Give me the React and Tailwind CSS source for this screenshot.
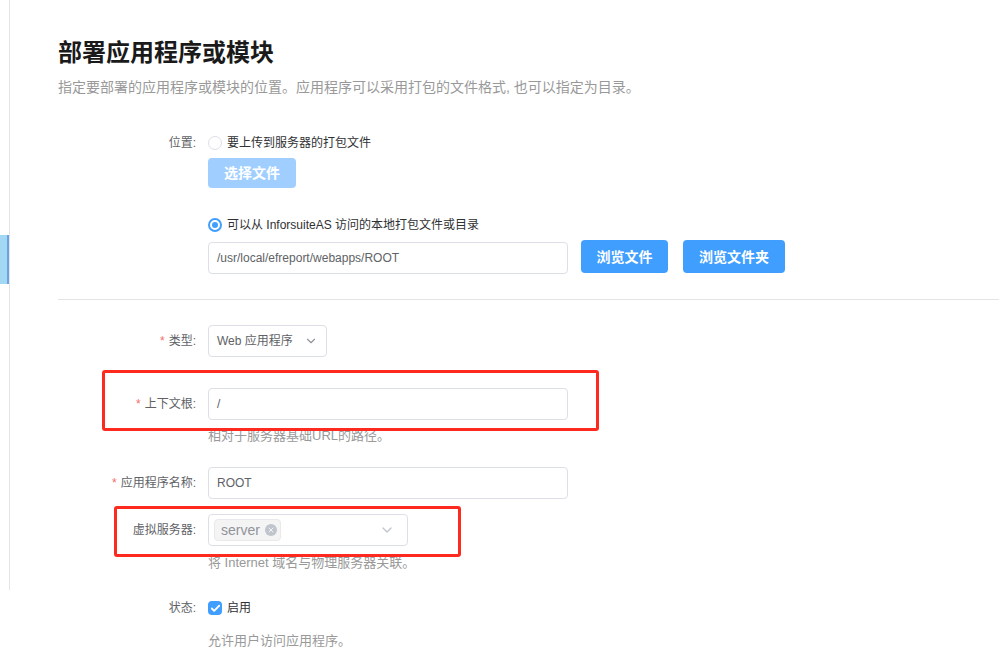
import { Check, ChevronDown, X } from "lucide-react";

const font = { fontFamily: '"Liberation Sans", "Noto Sans CJK SC", sans-serif' };

function Row({ label, required, children, className = "" }) {
  return (
    <div className={`flex items-center ${className}`}>
      <div className="w-[150px] shrink-0 pr-3 text-right text-xs text-[#606266]">
        {required && <span className="mr-1 text-[#f56c6c]">*</span>}
        {label}:
      </div>
      {children}
    </div>
  );
}

function Field({ children }) {
  return <div className="pl-[150px]">{children}</div>;
}

export default function App() {
  return (
    <div className="relative flex h-[647px] w-[999px] overflow-hidden bg-white" style={font}>
      {/* Sidebar edge */}
      <div className="h-[590px] w-[10px] shrink-0 border-r border-[#e4e4e4]">
        <div className="mt-[235px] flex h-[49px]">
          <div className="w-[8px] bg-[#a3d8f4]" />
          <div className="w-[2px] bg-[#6aa3e0]" />
        </div>
      </div>

      {/* Main */}
      <div className="flex-1 pl-[48px] pt-[37px]">
        <h1 className="text-2xl leading-8 font-bold text-[#1a1a1a]">部署应用程序或模块</h1>
        <p className="mt-[8px] text-sm leading-5 text-[#999]">
          指定要部署的应用程序或模块的位置。应用程序可以采用打包的文件格式, 也可以指定为目录。
        </p>

        <Row label="位置" className="mt-9 h-5">
          <label className="flex items-center gap-[5px] text-xs text-[#303133]">
            <span className="h-[14px] w-[14px] rounded-full border border-[#dcdfe6] bg-white" />
            要上传到服务器的打包文件
          </label>
        </Row>
        <Field>
          <button className="mt-[5px] h-[30px] w-[88px] rounded bg-[#a0cfff] text-sm font-bold text-white">选择文件</button>
          <label className="mt-[27px] flex h-5 items-center gap-[5px] text-xs text-[#303133]">
            <span className="flex h-[14px] w-[14px] items-center justify-center rounded-full border-2 border-[#409eff] bg-white">
              <span className="h-[6px] w-[6px] rounded-full bg-[#409eff]" />
            </span>
            可以从 InforsuiteAS 访问的本地打包文件或目录
          </label>
          <div className="mt-[5px] flex items-start">
            <div className="mt-[2px] flex h-8 w-[360px] items-center rounded border border-[#dcdfe6] px-2 text-xs text-[#606266]">
              /usr/local/efreport/webapps/ROOT
            </div>
            <button className="ml-[13px] h-[33px] w-[87px] rounded bg-[#409eff] text-sm font-bold text-white">浏览文件</button>
            <button className="ml-[15px] h-[33px] w-[102px] rounded bg-[#409eff] text-sm font-bold text-white">浏览文件夹</button>
          </div>
        </Field>

        <div className="mt-[25px] border-t border-[#e4e4e4]" />

        <Row label="类型" required className="mt-[25px]">
          <div className="flex h-[32px] w-[119px] items-center justify-between rounded border border-[#dcdfe6] pl-2 pr-2 text-xs text-[#606266]">
            Web 应用程序
            <ChevronDown size={14} className="text-[#909399]" />
          </div>
        </Row>

        <Row label="上下文根" required className="mt-[31px]">
          <div className="flex h-8 w-[360px] items-center rounded border border-[#dcdfe6] px-2 text-xs text-[#606266]">/</div>
        </Row>
        <Field>
          <p className="mt-[8px] text-[13px] leading-4 text-[#999]">相对于服务器基础URL的路径。</p>
        </Field>

        <Row label="应用程序名称" required className="mt-[23px]">
          <div className="flex h-8 w-[360px] items-center rounded border border-[#dcdfe6] px-2 text-xs text-[#606266]">ROOT</div>
        </Row>

        <Row label="虚拟服务器" className="mt-[15px]">
          <div className="flex h-8 w-[200px] items-center justify-between rounded border border-[#dcdfe6] pl-[5px] pr-3">
            <span className="flex h-[22px] items-center gap-[5px] rounded border border-[#e9e9eb] bg-[#f4f4f5] pl-[6px] pr-[3px] text-sm text-[#909399]">
              server
              <span className="flex h-[12px] w-[12px] items-center justify-center rounded-full bg-[#c0c4cc]">
                <X size={8} strokeWidth={3} className="text-[#f4f4f5]" />
              </span>
            </span>
            <ChevronDown size={16} className="text-[#c0c4cc]" />
          </div>
        </Row>
        <Field>
          <p className="mt-[9px] text-[13px] leading-4 text-[#999]">将 Internet 域名与物理服务器关联。</p>
        </Field>

        <Row label="状态" className="mt-[27px] h-5">
          <label className="flex items-center gap-[5px] text-xs text-[#303133]">
            <span className="flex h-[14px] w-[14px] items-center justify-center rounded-sm bg-[#409eff]">
              <Check size={11} strokeWidth={4} className="text-white" />
            </span>
            启用
          </label>
        </Row>
        <Field>
          <p className="mt-[15px] text-[13px] leading-4 text-[#999]">允许用户访问应用程序。</p>
        </Field>
      </div>

      {/* Annotation boxes */}
      <div className="absolute left-[102px] top-[370px] h-[61px] w-[497px] rounded-[3px] border-[3px] border-[#ff2a1f]" />
      <div className="absolute left-[114px] top-[506px] h-[51px] w-[347px] rounded-[3px] border-[3px] border-[#ff2a1f]" />
    </div>
  );
}
